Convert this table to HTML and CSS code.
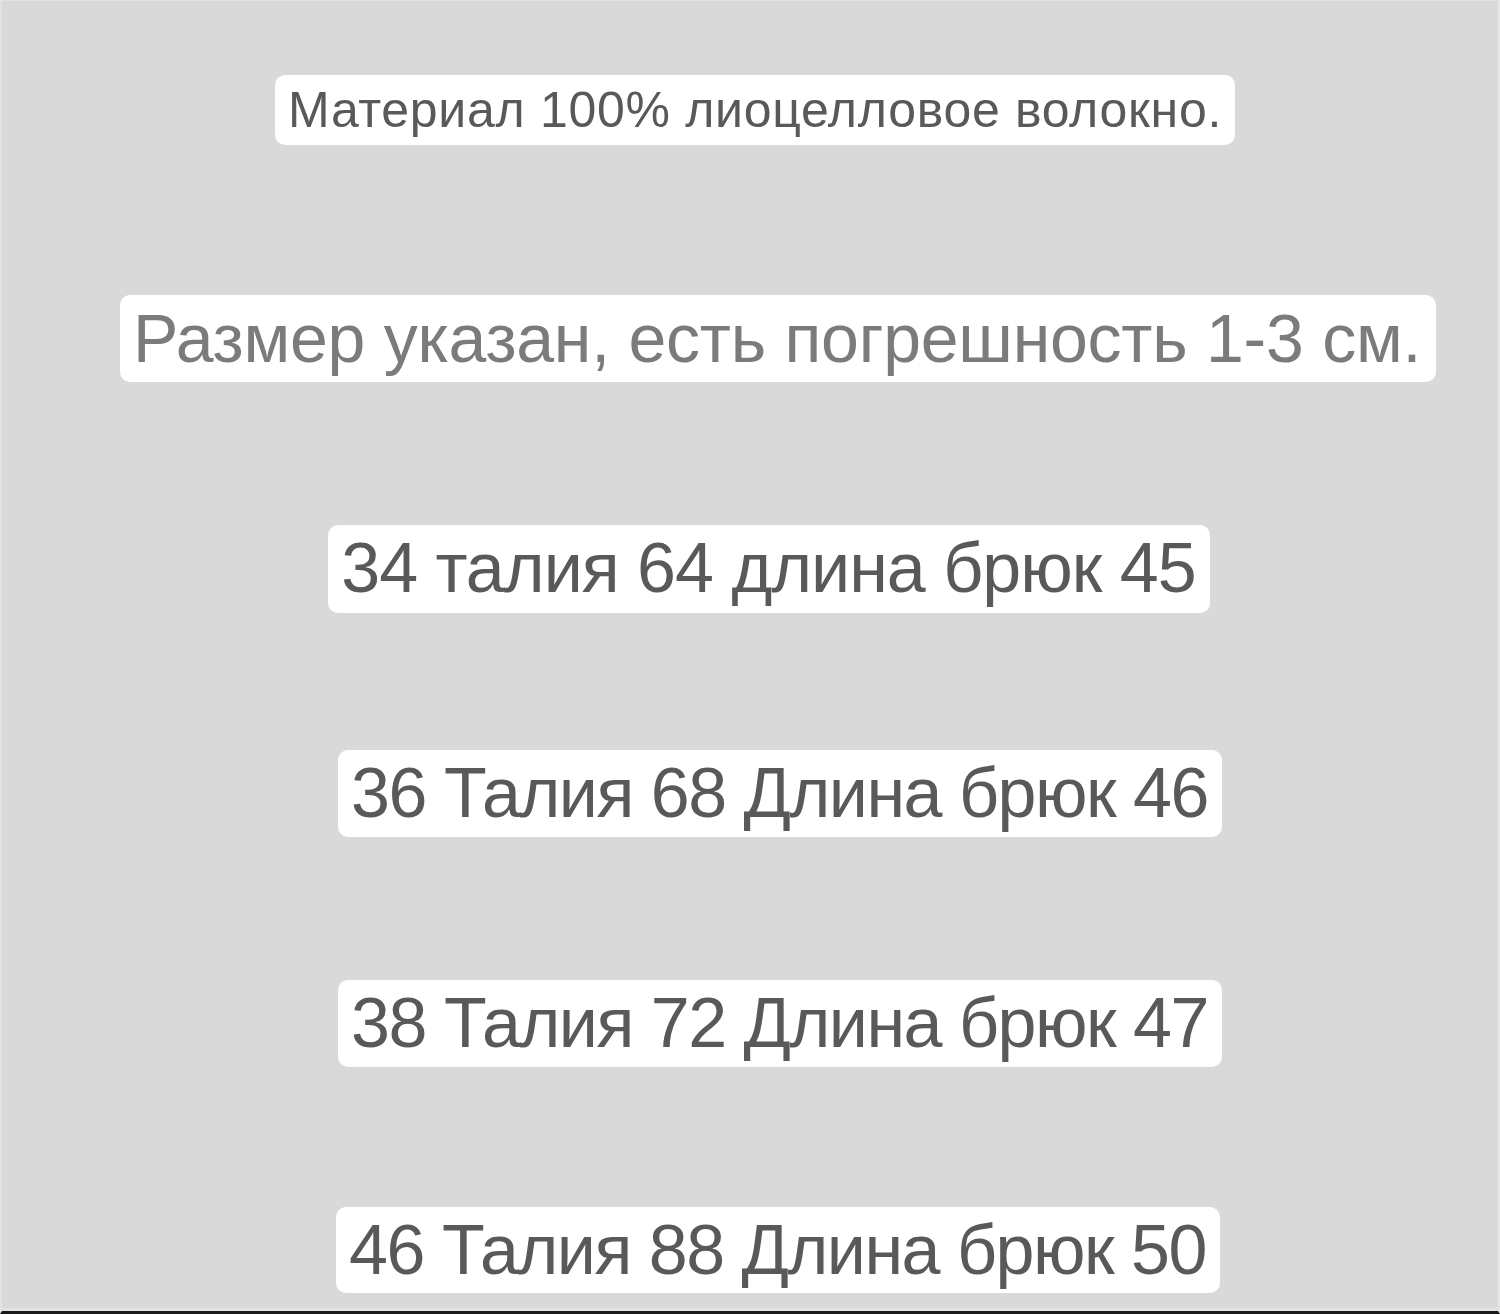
FILE: index.html
```html
<!DOCTYPE html>
<html lang="ru">
<head>
<meta charset="utf-8">
<title>Размеры</title>
<link rel="stylesheet" href="styles.css">
</head>
<body>
<main class="sheet">
  <p class="tag tag--material">Материал 100% лиоцелловое волокно.</p>
  <p class="tag tag--note">Размер указан, есть погрешность 1-3 см.</p>
  <p class="tag tag--row tag--r1">34 талия 64 длина брюк 45</p>
  <p class="tag tag--row tag--r2">36 Талия 68 Длина брюк 46</p>
  <p class="tag tag--row tag--r3">38 Талия 72 Длина брюк 47</p>
  <p class="tag tag--row tag--r4">46 Талия 88 Длина брюк 50</p>
</main>
</body>
</html>
```

FILE: styles.css
```css
html, body {
  margin: 0;
  padding: 0;
}
body {
  width: 1500px;
  height: 1314px;
  overflow: hidden;
  background: #d9d9d9;
  font-family: "Liberation Sans", Arial, sans-serif;
}
.sheet {
  box-sizing: border-box;
  width: 1500px;
  height: 1314px;
  display: flex;
  flex-direction: column;
  align-items: center;
  padding: 75px 0 0 56px;
  border-top: 1px solid #e4e4e4;
  border-left: 2px solid #e2e2e2;
  border-right: 2px solid #e6e6e6;
  border-bottom: 3px solid #1a1a1a;
  box-shadow: inset 0 -3px 0 #e2e2e0;
}
.tag {
  margin: 0;
  background: #fff;
  border-radius: 10px;
  color: #595959;
  white-space: nowrap;
}
.tag--material {
  font-size: 50px;
  letter-spacing: 0.7px;
  line-height: 70px;
  height: 70px;
  padding: 0 13px 0 13px;
  margin-right: 46px;
  margin-top: -1px;
}
.tag--note {
  font-size: 68px;
  letter-spacing: -0.25px;
  line-height: 87px;
  height: 87px;
  padding: 0 15px 0 13px;
  color: #7b7b7b;
  margin-top: 150px;
}
.tag--row {
  font-size: 70px;
  letter-spacing: -1.5px;
  line-height: 87px;
  height: 87px;
  padding: 0 14px 0 13px;
}
.tag--r1 {
  letter-spacing: -1px;
  height: 88px;
  margin-top: 143px;
  margin-right: 18px;
}
.tag--r2 {
  margin-top: 137px;
  margin-left: 4px;
}
.tag--r3 {
  margin-top: 143px;
  margin-left: 4px;
}
.tag--r4 {
  margin-top: 140px;
  height: 86px;
}
```
